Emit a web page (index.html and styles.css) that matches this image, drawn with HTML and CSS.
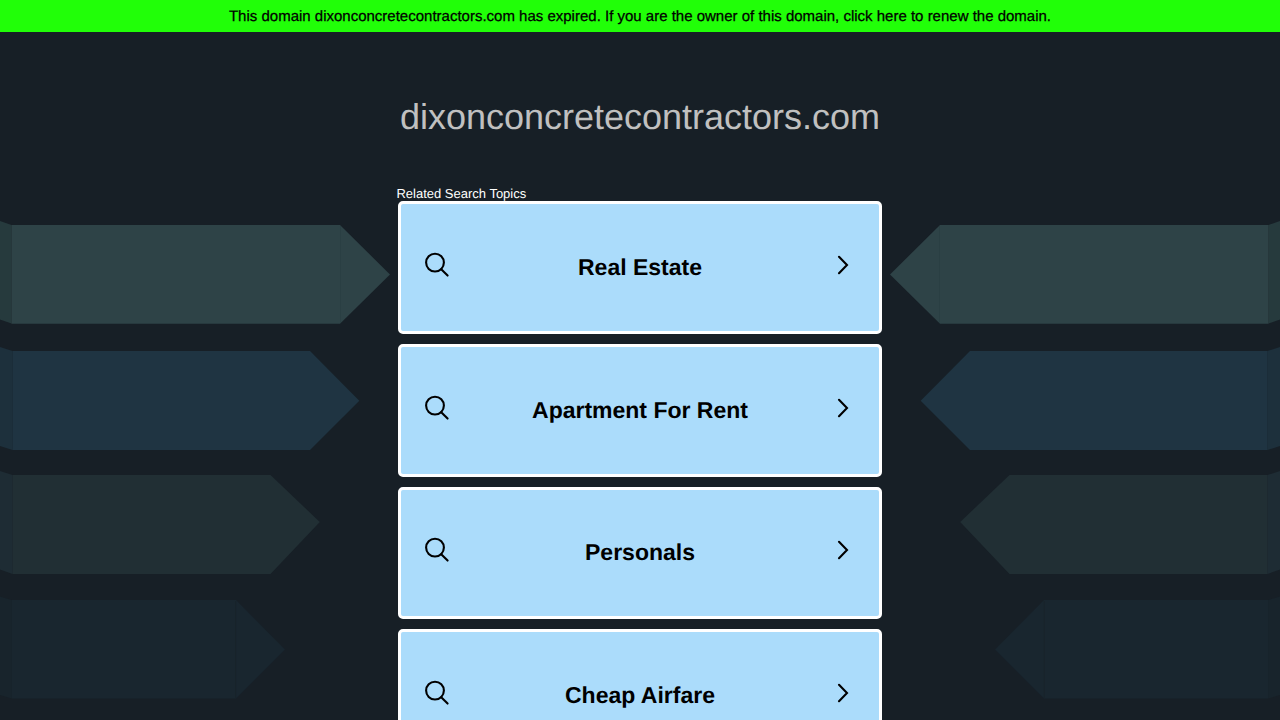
FILE: index.html
```html
<!DOCTYPE html>
<html lang="en">
<head>
<meta charset="utf-8">
<title>dixonconcretecontractors.com</title>
<link rel="stylesheet" href="styles.css">
</head>
<body>
<svg class="symbols" aria-hidden="true">
  <symbol id="search" viewBox="0 0 26 26"><circle cx="11" cy="10.6" r="8.9"/><path d="M17.2 17.2L23.6 23.6"/></symbol>
  <symbol id="chevron" viewBox="0 0 14 22"><path d="M3 2.8L11 11L3 19.2"/></symbol>
</svg>
<svg class="backdrop" viewBox="0 0 1280 720" aria-hidden="true">
  <defs>
    <g id="arrows">
      <path fill="#263a3d" d="M0 221L11.5 225V323.5L0 319.5Z"/>
      <path fill="#2e4347" d="M11.5 225H340L390 274.5L340 323.8H11.5Z"/>
      <path class="seam" stroke="#2a3f43" d="M340.5 226V323"/>
      <path fill="#1d303c" d="M0 347L12.5 351V450L0 446Z"/>
      <path fill="#1f3442" d="M12.5 351H310L359.3 400.7L310 450H12.5Z"/>
      <path fill="#1e2c34" d="M0 471L12.5 475V574L0 569.5Z"/>
      <path fill="#212f34" d="M12.5 475H270.5L319.8 522L270.5 574H12.5Z"/>
      <path fill="#18242c" d="M0 596.5L11.5 600V698.5L0 695Z"/>
      <path fill="#19262f" d="M11.5 600H236L285 649.5L236 698.5H11.5Z"/>
      <path class="seam" stroke="#18232b" d="M235.7 601V698"/>
    </g>
  </defs>
  <use href="#arrows"/>
  <use href="#arrows" transform="translate(1280 0) scale(-1 1)"/>
</svg>
<a class="banner">This domain dixonconcretecontractors.com has expired. If you are the owner of this domain, click here to renew the domain.</a>
<main class="page">
  <h1 class="domain">dixonconcretecontractors.com</h1>
  <p class="caption">Related Search Topics</p>
  <nav class="topics">
    <a class="topic"><svg class="icon search"><use href="#search"/></svg><span class="label">Real Estate</span><svg class="icon chevron"><use href="#chevron"/></svg></a>
    <a class="topic"><svg class="icon search"><use href="#search"/></svg><span class="label">Apartment For Rent</span><svg class="icon chevron"><use href="#chevron"/></svg></a>
    <a class="topic"><svg class="icon search"><use href="#search"/></svg><span class="label">Personals</span><svg class="icon chevron"><use href="#chevron"/></svg></a>
    <a class="topic"><svg class="icon search"><use href="#search"/></svg><span class="label">Cheap Airfare</span><svg class="icon chevron"><use href="#chevron"/></svg></a>
  </nav>
</main>
</body>
</html>
```
FILE: styles.css
```css
* { box-sizing: border-box; }
body {
  margin: 0;
  height: 720px;
  overflow: hidden;
  background: #171f26;
  font-family: "Liberation Sans", Arial, sans-serif;
  text-rendering: geometricPrecision;
}
.symbols { position: absolute; width: 0; height: 0; }
.backdrop { position: absolute; top: 0; left: 0; width: 1280px; height: 720px; z-index: -1; }
.seam { fill: none; }
.banner {
  display: block;
  height: 32px;
  padding-top: 1px;
  line-height: 31px;
  background: #21ff08;
  color: #000;
  font-size: 15px;
  text-align: center;
  white-space: nowrap;
  -webkit-text-stroke: 0.25px #000;
}
.page { width: 484px; margin: 0 auto; padding-top: 64px; }
.domain {
  margin: 0;
  font-size: 36px;
  line-height: 42px;
  font-weight: 400;
  color: #c0c0c0;
  text-align: center;
}
.caption {
  margin: 48px 0 0 -1.6px;
  font-size: 13px;
  line-height: 15.4px;
  color: #fff;
}
.topics { display: flex; flex-direction: column; gap: 10px; }
.topic {
  display: flex;
  align-items: center;
  flex: none;
  height: 132.6px;
  padding: 0 29px 0 23px;
  border: 3px solid #fff;
  border-radius: 5px;
  background: #abdcfb;
}
.label {
  flex: 1;
  margin-top: -1px;
  padding-left: 1px;
  text-align: center;
  font-size: 23px;
  line-height: 28px;
  font-weight: 700;
  color: #000;
}
.icon { fill: none; stroke: #000; stroke-width: 2.1; stroke-linecap: round; }
.search { width: 26px; height: 26px; margin-top: -5px; }
.chevron { width: 14px; height: 22px; margin: -5px 0 0 7px; }
```
